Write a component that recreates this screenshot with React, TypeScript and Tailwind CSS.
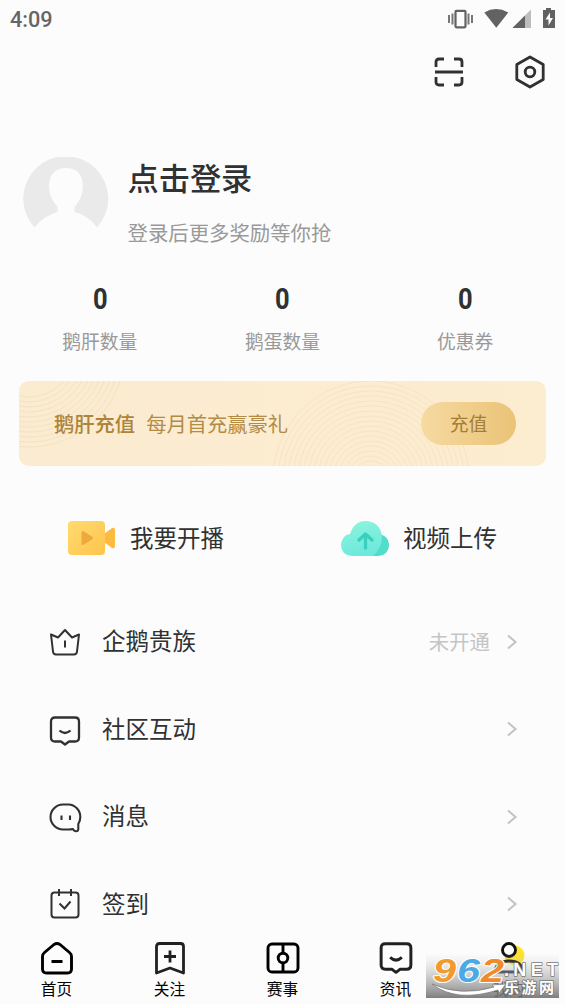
import type { ReactNode } from "react";

function StatusIcons() {
  return (
    <svg width="112" height="26" viewBox="448 6 112 26" fill="#626262">
      <path d="M449 15v8M452.5 13.5v11M468.500 13.5v11M472 15v8" stroke="#777" strokeWidth="2" />
      <rect x="455.5" y="10.8" width="10" height="16.5" rx="1" fill="none" stroke="#626262" strokeWidth="2.2" />
      <path d="M484.3 12.4Q496 5.5 508.3 12.4L496.3 27.8Z" />
      <path d="M531 9.5V28H512.5Z" fill="#bdbdbd" />
      <path d="M525 15.5V28H512.5Z" />
      <path d="M546 8h5v2h4v18h-12V10h3z" />
      <path d="M550 12.5l-4.5 7h3v6l4.5-7.5h-3z" fill="#fff" />
    </svg>
  );
}

function ScanIcon() {
  return (
    <svg width="30" height="30" viewBox="0 0 30 30" fill="none" stroke="#303132" strokeWidth="2.8">
      <path d="M2 10V5Q2 2 5 2h5M20 2h5q3 0 3 3v5M28 20v5q0 3-3 3h-5M10 28H5q-3 0-3-3v-5M1 15h28" />
    </svg>
  );
}

function SettingsIcon() {
  return (
    <svg width="32" height="34" viewBox="0 0 32 34" fill="none" stroke="#303132" strokeWidth="2.8" strokeLinejoin="round">
      <path d="M16 2l13.2 7.5v15L16 32 2.8 24.5v-15z" />
      <circle cx="16" cy="17" r="4.8" />
    </svg>
  );
}

function Avatar() {
  return (
    <svg width="86" height="86" viewBox="0 0 86 86" className="shrink-0">
      <path
        d="M11.500 70.500A42.500 42.500 0 1 1 74 70.500Q65 58 51.500 55V50Q60 41 60 29Q59 11 43 11Q27 11 26 29Q26 41 34.500 50V55Q20 59 11.500 70.500Z"
        fill="#eaeaea"
      />
    </svg>
  );
}

function CrownIcon() {
  return (
    <svg width="32" height="32" viewBox="0 0 32 32" fill="none" stroke="#303132" strokeWidth="2" strokeLinejoin="round">
      <path d="M2 8.500l7 3 7-7.500 7 7.500 7-3-2 17q-.300 3-3 3H7q-2.700 0-3-3zM16 14.500v7" />
    </svg>
  );
}

type ChatSmileProps = { color?: string; width?: number; size?: number };

function ChatSmileIcon({ color = "#303132", width = 2.3, size = 32 }: ChatSmileProps) {
  return (
    <svg width={size} height={size} viewBox="0 0 32 32" fill="none" stroke={color} strokeWidth={width} strokeLinejoin="round">
      <path d="M6 2.500h20q4 0 4 4v16q0 4-4 4h-6L16 29.500 12 26.500H6q-4 0-4-4v-16q0-4 4-4z" />
      <path d="M10.500 15.500q5.500 5 11 0" />
    </svg>
  );
}

function MessageIcon() {
  return (
    <svg width="34" height="32" viewBox="0 0 34 32" fill="none" stroke="#303132" strokeWidth="2.100" strokeLinejoin="round">
      <path d="M14 2.500h5.500a12.200 12.500 0 0 1 11.800 12.500q0 4-2 7v5q0 2.500-2.400 2.200-2-.2-3-2.200-2 .5-4.400.5H14A12.500 12.500 0 0 1 14 2.500z" />
      <path d="M12.500 13.500v4.500M21 13.500v4.500" />
    </svg>
  );
}

function CheckInIcon() {
  return (
    <svg width="32" height="32" viewBox="0 0 32 32" fill="none" stroke="#303132" strokeWidth="2">
      <rect x="2.500" y="4.500" width="27" height="25" rx="3" />
      <path d="M10 1v7M22 1v7M10.500 15.500l5 5 6-7" />
    </svg>
  );
}

function HomeIcon() {
  return (
    <svg width="34" height="34" viewBox="0 0 34 34" fill="none" stroke="#000" strokeWidth="2.900" strokeLinejoin="round">
      <path d="M14 3.500q3-2 6 0l9.500 8q2 1.700 2 4V28q0 4-4 4h-21q-4 0-4-4V15.500q0-2.300 2-4zM11.500 20.500h11" />
    </svg>
  );
}

function FollowIcon() {
  return (
    <svg width="34" height="34" viewBox="0 0 34 34" fill="none" stroke="#202122" strokeWidth="2.800" strokeLinejoin="round">
      <path d="M6.500 2.500h21q3 0 3 3V32L17 27 3.500 32V5.500q0-3 3-3zM17 9.500v12M11 15.500h12" />
    </svg>
  );
}

function MatchIcon() {
  return (
    <svg width="34" height="34" viewBox="0 0 34 34" fill="none" stroke="#000" strokeWidth="2.900">
      <rect x="2" y="3" width="30" height="28" rx="4" />
      <circle cx="17" cy="17" r="4.800" />
      <path d="M17 3v9M17 22v9" />
    </svg>
  );
}

function MineIcon() {
  return (
    <svg width="34" height="34" viewBox="0 0 34 34" fill="none">
      <circle cx="22.500" cy="14.500" r="10" fill="#ffe22c" />
      <circle cx="17" cy="9" r="6.500" fill="#fff" stroke="#111" strokeWidth="2.900" />
      <path d="M3 31q1-11 14-11t14 11z" stroke="#111" strokeWidth="2.900" />
    </svg>
  );
}

function Chevron() {
  return (
    <svg width="12" height="18" viewBox="0 0 12 18" fill="none" stroke="#c2c2c2" strokeWidth="2">
      <path d="M2 2.500l7.500 6.500L2 15.500" />
    </svg>
  );
}

function CameraIcon() {
  return (
    <svg width="50" height="36" viewBox="0 0 50 36">
      <defs>
        <linearGradient id="camera" x2="1" y2="1">
          <stop stopColor="#ffdb70" />
          <stop offset="1" stopColor="#ffc44c" />
        </linearGradient>
      </defs>
      <path d="M37 14l8-6q3-1 3 2v16q0 3-3 2l-8-6z" fill="#fcbb3e" />
      <rect x="1" y="1" width="37" height="34" rx="4" fill="url(#camera)" />
      <path d="M15 12q-1-1 1-1l9 5.500q2 1.500 0 3L16 25q-1.500.5-1.500-1V12z" fill="#efa83b" />
    </svg>
  );
}

function CloudIcon() {
  return (
    <svg width="50" height="37" viewBox="0 0 50 37">
      <defs>
        <linearGradient id="cloud" x2=".3" y2="1">
          <stop stopColor="#8df6dd" />
          <stop offset="1" stopColor="#6ee9dc" />
        </linearGradient>
      </defs>
      <path d="M31 36h7q11-1 11-12-1-9-11-10z" fill="#52ddcb" />
      <path d="M12 36Q1 35 1 25q1-10 9-11Q14 1 26 1q14 1 16 15 0 12-9 20z" fill="url(#cloud)" />
      <path d="M19 20l6.500-6 6.500 6M25.500 15v13" fill="none" stroke="#3bd0bd" strokeWidth="3.400" strokeLinejoin="round" strokeLinecap="round" />
    </svg>
  );
}

const leftRings = [46, 51, 56, 61, 66, 71, 76, 81, 86, 91, 96];
const rightRings = [8, 13, 18, 23, 28, 33, 38, 43, 48, 53, 58, 63, 68, 73, 78, 83, 88, 93, 98];

function Banner() {
  return (
    <div className="relative mx-[19px] mt-6 flex h-[85px] items-center overflow-hidden rounded-[10px] bg-linear-to-r from-[#faebd1] via-[#fcecd0] to-[#fcedcf] pr-[30px] pl-[35px] text-[20.3px]">
      <svg className="absolute inset-0" width="527" height="85" fill="none" stroke="#ecdcb6" strokeWidth=".8">
        {leftRings.map((r) => (
          <circle key={r} cx="10" cy="-30" r={r} opacity=".7" />
        ))}
        {rightRings.map((r) => (
          <circle key={r} cx="352" cy="98" r={r} stroke="#efd8ac" opacity=".5" />
        ))}
      </svg>
      <span className="relative font-medium text-[#ad843b]">鹅肝充值</span>
      <span className="relative ml-[11px] text-[#b28b46]">每月首充赢豪礼</span>
      <button className="relative ml-auto h-[43px] w-[95px] rounded-full bg-linear-to-r from-[#f6daa1] to-[#eac376] text-[18.8px] text-[#a47d36]">
        充值
      </button>
    </div>
  );
}

const stats = ["鹅肝数量", "鹅蛋数量", "优惠券"];

const menu: { label: string; icon: ReactNode; note?: string }[] = [
  { label: "企鹅贵族", icon: <CrownIcon />, note: "未开通" },
  { label: "社区互动", icon: <span className="pt-[3px]"><ChatSmileIcon /></span> },
  { label: "消息", icon: <span className="pt-0.5"><MessageIcon /></span> },
  { label: "签到", icon: <CheckInIcon /> }
];

const tabs: { label: string; icon: ReactNode }[] = [
  { label: "首页", icon: <HomeIcon /> },
  { label: "关注", icon: <FollowIcon /> },
  { label: "赛事", icon: <MatchIcon /> },
  { label: "资讯", icon: <ChatSmileIcon color="#202122" width={2.8} size={34} /> },
  { label: "我的", icon: <MineIcon /> }
];

function Watermark() {
  return (
    <svg className="absolute top-[953px] left-[426px]" width="139" height="51" viewBox="0 0 139 51">
      <defs>
        <linearGradient id="shade" x2="0" y2="1">
          <stop stopColor="#ccc" stopOpacity="0" />
          <stop offset=".5" stopColor="#aaa" stopOpacity=".55" />
          <stop offset="1" stopColor="#707070" stopOpacity=".9" />
        </linearGradient>
      </defs>
      <rect width="133" height="45" fill="url(#shade)" />
      <g
        fontFamily="'Liberation Sans', sans-serif"
        fontWeight="700"
        stroke="#fff"
        strokeWidth="2"
        strokeLinejoin="round"
        paintOrder="stroke"
      >
        <g fontSize="34" fontStyle="italic">
          <text x="7" y="28.500" fill="#f39a2d" textLength="23" lengthAdjust="spacingAndGlyphs">9</text>
          <text x="31" y="28.500" fill="#4ba9e5" textLength="23" lengthAdjust="spacingAndGlyphs">6</text>
          <text x="55" y="28.500" fill="#f08b2b" textLength="23" lengthAdjust="spacingAndGlyphs">2</text>
        </g>
        <text x="78" y="22.500" fontSize="18" fill="#fff" stroke="#777" strokeWidth="1.500" textLength="54">.NET</text>
      </g>
      <path d="M6 31q29 13 62 3l-2-2 14-1-7 9-1-3Q30 50 6 31z" fill="#fff" stroke="#777" strokeWidth=".7" />
      <text x="78" y="40" fontSize="15" fontWeight="700" fontFamily="'Noto Sans CJK SC', sans-serif" fill="#fff" stroke="#777" strokeWidth="1.500" paintOrder="stroke" textLength="50">
        乐游网
      </text>
    </svg>
  );
}

export default function App() {
  return (
    <div className="relative h-[1004px] w-[565px] overflow-hidden bg-[#fcfcfc] font-['Noto_Sans_CJK_SC',sans-serif] text-[#303132]">
      <main className="h-[932px] overflow-hidden">
        <div className="flex h-10 items-start justify-between pt-1.5 pr-[5px] pl-2.5">
          <span className="font-['Roboto',sans-serif] text-[21.7px] leading-7 font-medium text-[#666]">4:09</span>
          <StatusIcons />
        </div>

        <header className="flex h-16 items-center justify-end gap-[49.5px] pr-[19.5px]">
          <ScanIcon />
          <SettingsIcon />
        </header>

        <section className="mt-[53px] flex h-[86px] pl-[23px]">
          <Avatar />
          <div className="ml-[18.5px]">
            <h1 className="mt-0.5 text-[31.2px] leading-9 font-medium">点击登录</h1>
            <p className="mt-[21px] text-[20.4px] leading-8 text-[#999]">登录后更多奖励等你抢</p>
          </div>
        </section>

        <section className="mx-[8.5px] mt-10 grid grid-cols-3 text-center">
          {stats.map((label) => (
            <div key={label}>
              <div className="h-8 scale-x-85 font-['Roboto',sans-serif] text-[30px] leading-8 font-bold">0</div>
              <div className="mt-2.5 h-8 text-[18.8px] leading-8 text-[#999]">{label}</div>
            </div>
          ))}
        </section>

        <Banner />

        <section className="mt-7 flex h-[88px] items-center text-[23.5px]">
          <div className="flex w-[340px] items-center pl-[67px]">
            <CameraIcon />
            <span className="ml-[13px]">我要开播</span>
          </div>
          <div className="flex items-center">
            <CloudIcon />
            <span className="ml-[13px]">视频上传</span>
          </div>
        </section>

        <ul className="mt-4">
          {menu.map((item) => (
            <li key={item.label} className="flex h-[87.5px] items-center pr-[47px] pl-[49px]">
              <span className="flex w-[53px]">{item.icon}</span>
              <span className="pb-0.5 text-[23.5px]">{item.label}</span>
              <span className="mr-4 ml-auto text-[20.4px] text-[#c5c5c5]">{item.note}</span>
              <Chevron />
            </li>
          ))}
        </ul>
      </main>

      <nav className="grid h-[72px] grid-cols-5 pt-[9px] text-[15.7px] leading-6 text-black">
        {tabs.map((tab) => (
          <div key={tab.label} className="flex flex-col items-center">
            <div className="flex h-[34px] items-center">{tab.icon}</div>
            <span className="mt-0.5">{tab.label}</span>
          </div>
        ))}
      </nav>

      <Watermark />
    </div>
  );
}
